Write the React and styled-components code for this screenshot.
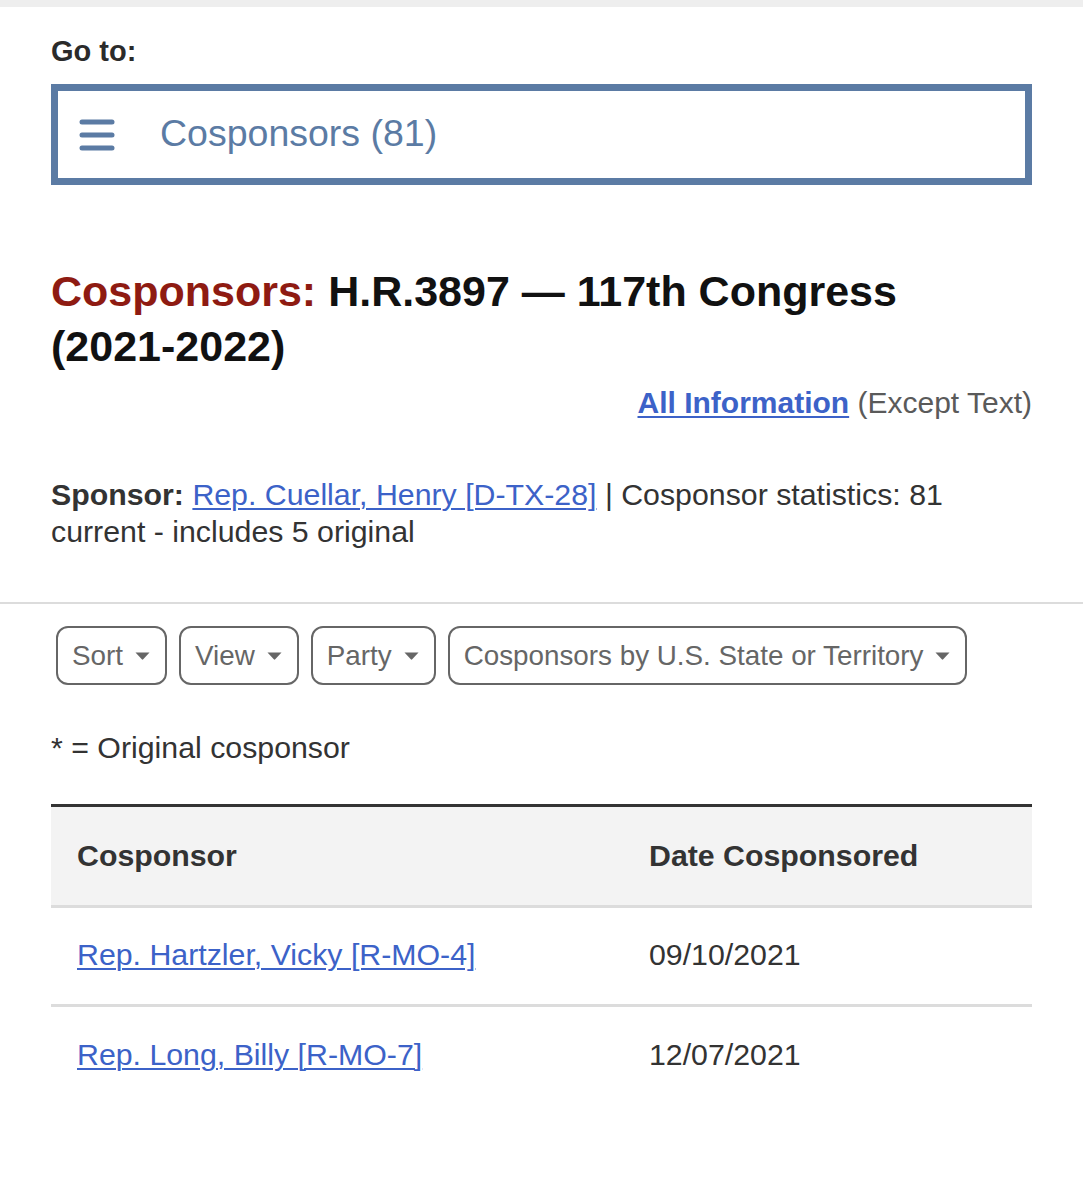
import React from "react";
import styled, { createGlobalStyle } from "styled-components";

const Global = createGlobalStyle`
  html, body { margin: 0; padding: 0; background: #fff; }
  body { font-family: "Liberation Sans", Arial, Helvetica, sans-serif; color: #333; }
  * { box-sizing: border-box; }
`;

const TopStrip = styled.div`
  height: 7px;
  background: #eeeeee;
`;

const Section = styled.div`
  padding: 0 51px;
`;

const GoToLabel = styled.div`
  margin-top: 27px;
  font-size: 29px;
  line-height: 34px;
  font-weight: 700;
  color: #2b2b2b;
`;

const JumpBox = styled.div`
  margin-top: 16px;
  height: 101px;
  border: 7px solid #5b7ba4;
  display: flex;
  align-items: center;
  padding-left: 21px;
  gap: 45px;
  color: #5b7ba4;
`;

const JumpText = styled.span`
  font-size: 37.5px;
  line-height: 1;
  padding-bottom: 1px;
`;

const Heading = styled.h1`
  margin: 79px 0 0;
  font-size: 43px;
  line-height: 55px;
  font-weight: 700;
  color: #111;
`;

const HeadingLead = styled.span`
  color: #8e1b12;
`;

const NoWrap = styled.span`
  white-space: nowrap;
`;

const InfoLine = styled.div`
  margin-top: 10px;
  text-align: right;
  font-size: 30px;
  line-height: 38px;
  color: #5a5a5a;
`;

const Link = styled.a`
  color: #3c62c8;
  text-decoration: underline;
  text-underline-offset: 3px;
  text-decoration-thickness: 2px;
  font-weight: ${(p) => (p.$bold ? 700 : 400)};
  cursor: pointer;
`;

const SponsorLine = styled.p`
  margin: 54px 0 0;
  font-size: 30.3px;
  line-height: 37px;
  color: #333;
`;

const Strong = styled.strong`
  font-weight: 700;
`;

const Rule = styled.hr`
  margin: 52px 0 0;
  border: 0;
  height: 2px;
  background: #dcdcdc;
`;

const FilterRow = styled.div`
  margin-top: 22px;
  padding-left: 5px;
  display: flex;
  gap: 12px;
`;

const FilterButton = styled.button`
  height: 59px;
  display: flex;
  align-items: center;
  gap: 12px;
  padding: 0 15px 0 14px;
  border: 2px solid #666;
  border-radius: 12px;
  background: #fff;
  color: #666;
  font-family: "Liberation Sans", Arial, Helvetica, sans-serif;
  font-size: 27.8px;
  line-height: 1;
  cursor: pointer;
`;

const Note = styled.p`
  margin: 44px 0 0;
  font-size: 30.3px;
  line-height: 38px;
  color: #333;
`;

const Table = styled.table`
  margin-top: 37px;
  width: 100%;
  border-collapse: collapse;
  border-top: 3px solid #333;
  font-size: 30.3px;
  color: #333;
`;

const HeadCell = styled.th`
  background: #f3f3f3;
  height: 101px;
  padding: 0 26px;
  text-align: left;
  font-weight: 700;
  border-bottom: 3px solid #dcdcdc;
  width: ${(p) => p.$w || "auto"};
`;

const Cell = styled.td`
  height: 99px;
  padding: 0 26px 2px;
  border-bottom: ${(p) => (p.$last ? "none" : "3px solid #dcdcdc")};
`;

const Hamburger = () => (
  <svg width="36" height="32" viewBox="0 0 36 32" aria-hidden="true">
    <g stroke="#5b7ba4" strokeWidth="5" strokeLinecap="round">
      <line x1="3" y1="3" x2="33" y2="3" />
      <line x1="3" y1="16" x2="33" y2="16" />
      <line x1="3" y1="29" x2="33" y2="29" />
    </g>
  </svg>
);

const Caret = () => (
  <svg width="15" height="8" viewBox="0 0 15 8" aria-hidden="true">
    <path d="M0.5 0.5 H14.5 L8.2 7.3 Q7.5 8 6.8 7.3 Z" fill="#666" />
  </svg>
);

const filters = ["Sort", "View", "Party", "Cosponsors by U.S. State or Territory"];

const rows = [
  { name: "Rep. Hartzler, Vicky [R-MO-4]", date: "09/10/2021" },
  { name: "Rep. Long, Billy [R-MO-7]", date: "12/07/2021" },
];

export default function App() {
  return (
    <>
      <Global />
      <TopStrip />
      <Section>
        <GoToLabel>Go to:</GoToLabel>
        <JumpBox>
          <Hamburger />
          <JumpText>Cosponsors (81)</JumpText>
        </JumpBox>
        <Heading>
          <HeadingLead>Cosponsors:</HeadingLead> H.R.3897 — 117th Congress{" "}
          <NoWrap>(2021-2022)</NoWrap>
        </Heading>
        <InfoLine>
          <Link $bold>All Information</Link> (Except Text)
        </InfoLine>
        <SponsorLine>
          <Strong>Sponsor:</Strong> <Link>Rep. Cuellar, Henry [D-TX-28]</Link> | Cosponsor
          statistics: 81 current - includes 5 original
        </SponsorLine>
      </Section>
      <Rule />
      <Section>
        <FilterRow>
          {filters.map((f) => (
            <FilterButton key={f}>
              {f}
              <Caret />
            </FilterButton>
          ))}
        </FilterRow>
        <Note>* = Original cosponsor</Note>
        <Table>
          <thead>
            <tr>
              <HeadCell $w="572px">Cosponsor</HeadCell>
              <HeadCell>Date Cosponsored</HeadCell>
            </tr>
          </thead>
          <tbody>
            {rows.map((r, i) => (
              <tr key={r.name}>
                <Cell $last={i === rows.length - 1}>
                  <Link>{r.name}</Link>
                </Cell>
                <Cell $last={i === rows.length - 1}>{r.date}</Cell>
              </tr>
            ))}
          </tbody>
        </Table>
      </Section>
    </>
  );
}
